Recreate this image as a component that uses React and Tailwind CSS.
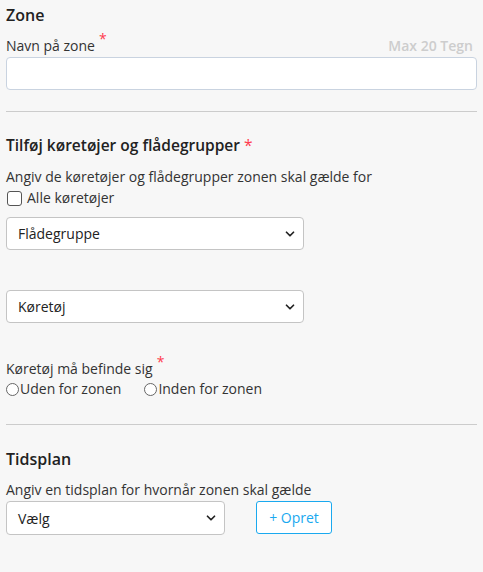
import { ChevronDown } from 'lucide-react';

function Req() {
  return <span className="relative -top-[7px] ml-1 text-[14px] text-[#ff3b4e]">*</span>;
}

function SelectBox({ label, className = '' }) {
  return (
    <div className={`flex h-[33px] items-center justify-between rounded-[4px] border border-[#c4c4c4] bg-white pl-[11px] pr-[6px] ${className}`}>
      <span className="text-[14px] text-[#222]">{label}</span>
      <ChevronDown size={14} strokeWidth={3} className="text-[#222]" />
    </div>
  );
}

function Radio({ label }) {
  return (
    <label className="flex items-center gap-[1px]">
      <span className="h-[13px] w-[13px] rounded-full border border-[#666] bg-white" />
      <span>{label}</span>
    </label>
  );
}

export default function App() {
  return (
    <div className="min-h-[572px] bg-[#f7f7f7] px-[6px] text-[14px] text-[#333]" style={{ fontFamily: '"Open Sans", sans-serif' }}>
      {/* Zone */}
      <h2 className="pt-[3px] text-[16px] font-semibold leading-[24px] text-[#222]">Zone</h2>
      <div className="mt-[9px] flex items-end justify-between">
        <span className="leading-[20px]">Navn på zone<Req /></span>
        <span className="mr-[4px] text-[14px] font-semibold leading-[20px] text-[#cdcdcd]">Max 20 Tegn</span>
      </div>
      <div className="mt-[1px] h-[33px] rounded-[4px] border border-[#c9d3e0] bg-white" />

      <hr className="mt-[21px] border-t border-[#cccccc]" />

      {/* Køretøjer */}
      <h2 className="mt-[21px] text-[15.5px] font-semibold leading-[24px] text-[#222]">
        Tilføj køretøjer og flådegrupper <span className="font-normal text-[#ff3b4e]">*</span>
      </h2>
      <p className="mt-[10px] leading-[20px]">Angiv de køretøjer og flådegrupper zonen skal gælde for</p>
      <label className="mt-[1px] flex items-center gap-[5px] pl-[1px] leading-[20px]">
        <span className="h-[15px] w-[15px] rounded-[3px] border border-[#555] bg-white" />
        Alle køretøjer
      </label>
      <SelectBox label="Flådegruppe" className="mt-[9px] w-[298px]" />
      <SelectBox label="Køretøj" className="mt-[40px] w-[298px]" />

      <div className="mt-[36px] leading-[20px]">Køretøj må befinde sig<Req /></div>
      <div className="flex items-center gap-[23px] leading-[20px]">
        <Radio label="Uden for zonen" />
        <Radio label="Inden for zonen" />
      </div>

      <hr className="mt-[25px] border-t border-[#cccccc]" />

      {/* Tidsplan */}
      <h2 className="mt-[22px] text-[16px] font-semibold leading-[24px] text-[#222]">Tidsplan</h2>
      <p className="mt-[9px] leading-[20px]">Angiv en tidsplan for hvornår zonen skal gælde</p>
      <div className="mt-[1px] flex items-start gap-[31px]">
        <SelectBox label="Vælg" className="h-[34px] w-[219px] pl-[4px]" />
        <button className="h-[33px] w-[76px] rounded-[3px] border border-[#1aa9ef] bg-white text-[14px] text-[#1aa9ef]">+ Opret</button>
      </div>
    </div>
  );
}
